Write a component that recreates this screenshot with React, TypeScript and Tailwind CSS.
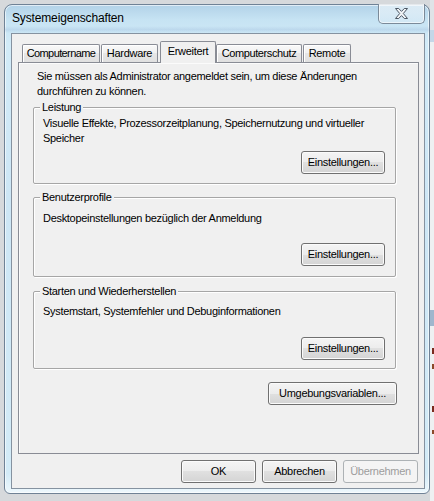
import React from "react";

const btnBase =
  "h-[23px] rounded-[3px] border flex items-center justify-center text-[11px] leading-[15px] tracking-[-0.3px] whitespace-nowrap";
const btnNormal =
  "border-[#707070] bg-[linear-gradient(to_bottom,#f4f4f4_0%,#ececec_50%,#e0e0e0_50%,#d4d4d4_100%)] shadow-[inset_0_0_0_1px_#fbfbfb] text-black";
const btnDisabled = "border-[#adb2b5] bg-[#f4f4f4] text-[#9d9d9d]";

function Button({
  label,
  className,
  disabled,
}: {
  label: string;
  className: string;
  disabled?: boolean;
}) {
  return (
    <div className={`${btnBase} ${disabled ? btnDisabled : btnNormal} ${className}`}>
      {label}
    </div>
  );
}

function Group({
  title,
  className,
  children,
}: {
  title: string;
  className: string;
  children: React.ReactNode;
}) {
  return (
    <div
      className={`relative ml-[14px] w-[363px] border border-[#a6a6a6] rounded-[2px] shadow-[inset_1px_1px_0_#ffffff,1px_1px_0_#ffffff] flex flex-col pl-[9px] pr-[10px] ${className}`}
    >
      <span className="absolute -top-[8px] left-[6px] px-[2px] bg-[#f0f0f0] text-[11px] leading-[15px] tracking-[-0.3px]">
        {title}
      </span>
      {children}
    </div>
  );
}

function Tab({
  label,
  className,
  selected,
}: {
  label: string;
  className: string;
  selected?: boolean;
}) {
  return (
    <div
      className={
        selected
          ? `relative z-10 h-[22px] -mb-px pb-[2px] border border-b-0 border-[#898c95] rounded-t-[2px] bg-[#f0f0f0] flex items-center justify-center text-[11px] leading-[15px] tracking-[-0.3px] whitespace-nowrap ${className}`
          : `h-[18px] border border-b-0 border-[#898c95] rounded-t-[2px] bg-[linear-gradient(to_bottom,#f9f9f9_0%,#f0f0f0_50%,#e6e6e6_50%,#e0e0e0_100%)] shadow-[inset_1px_1px_0_#ffffff] flex items-center justify-center text-[11px] leading-[15px] whitespace-nowrap ${className}`
      }
    >
      {label}
    </div>
  );
}

function CloseGlyph() {
  return (
    <svg width="13" height="11" viewBox="0 0 13 11">
      <polygon
        points="0.5,0.5 3.7,0.5 6.5,3.4 9.3,0.5 12.5,0.5 8.3,5.5 12.5,10.5 9.3,10.5 6.5,7.6 3.7,10.5 0.5,10.5 4.7,5.5"
        fill="#f2f5f8"
        stroke="#4b5663"
        strokeWidth="1"
        strokeLinejoin="round"
      />
    </svg>
  );
}

function Window() {
  return (
    <div className="w-[426px] h-[490px] border border-[#6f8296] rounded-t-[8px] rounded-b-[6px] bg-[linear-gradient(180deg,#b2d2e8_0%,#c6e3f3_3%,#d2ebf8_8%,#cde6f5_40%,#d3ebf7_96%,#eef8fd_100%)] shadow-[inset_0_0_0_1px_rgba(255,255,255,0.6)] flex flex-col">
      {/* caption */}
      <div className="h-[28px] flex items-start justify-between bg-[linear-gradient(180deg,rgba(255,255,255,0)_0%,rgba(255,255,255,0)_75%,rgba(160,190,220,0.35)_88%,rgba(255,255,255,0)_100%)]">
        <span className="pl-[7px] pt-[6px] text-[12px] leading-[15px] tracking-[-0.15px] text-black">
          Systemeigenschaften
        </span>
        <div className="-mt-px mr-[4px] w-[47px] h-[20px] border border-t-0 border-[#7b8a99] rounded-b-[5px] bg-[linear-gradient(180deg,rgba(255,255,255,0.55)_0%,rgba(235,244,250,0.6)_50%,rgba(214,232,244,0.6)_100%)] shadow-[inset_0_0_0_1px_rgba(255,255,255,0.6)] flex items-center justify-center pb-px">
          <CloseGlyph />
        </div>
      </div>

      {/* client area */}
      <div className="ml-[6px] mr-[4px] h-[456px] border border-[#8592a0] bg-[#f0f0f0] flex flex-col">
        <div className="ml-[6px] mr-[5px] pt-[7px] flex flex-col">
          <div className="h-[21px] pl-[4px] flex items-end">
            <Tab label="Computername" className="w-[78px] tracking-[-0.6px]" />
            <Tab label="Hardware" className="ml-[1px] w-[57px] tracking-[-0.3px]" />
            <Tab label="Erweitert" selected className="ml-[2px] w-[56px]" />
            <Tab label="Computerschutz" className="w-[86px] tracking-[-0.4px]" />
            <Tab label="Remote" className="ml-[1px] w-[48px] tracking-[-0.3px]" />
          </div>

          <div className="h-[392px] border border-[#898c95] bg-[#f0f0f0] shadow-[inset_1px_1px_0_#fbfbfb] flex flex-col">
            <p className="pt-[6px] pl-[18px] text-[11px] leading-[15px] tracking-[-0.3px]">
              Sie müssen als Administrator angemeldet sein, um diese Änderungen
              <br />
              durchführen zu können.
            </p>

            <Group title="Leistung" className="mt-[8px] h-[77px] pt-[8px] pb-[9px]">
              <p className="text-[11px] leading-[15px] tracking-[-0.3px]">
                Visuelle Effekte, Prozessorzeitplanung, Speichernutzung und virtueller
                <br />
                Speicher
              </p>
              <Button label="Einstellungen..." className="mt-auto self-end w-[84px]" />
            </Group>

            <Group title="Benutzerprofile" className="mt-[13px] h-[80px] pt-[13px] pb-[10px]">
              <p className="text-[11px] leading-[15px] tracking-[-0.3px]">
                Desktopeinstellungen bezüglich der Anmeldung
              </p>
              <Button label="Einstellungen..." className="mt-auto self-end w-[84px]" />
            </Group>

            <Group title="Starten und Wiederherstellen" className="mt-[14px] h-[78px] pt-[12px] pb-[8px]">
              <p className="text-[11px] leading-[15px] tracking-[-0.3px]">
                Systemstart, Systemfehler und Debuginformationen
              </p>
              <Button label="Einstellungen..." className="mt-auto self-end w-[84px]" />
            </Group>

            <Button
              label="Umgebungsvariablen..."
              className="mt-[13px] self-end mr-[21px] w-[129px]"
            />
          </div>

          <div className="mt-[6px] flex justify-end gap-[6px] pr-[1px]">
            <Button label="OK" className="w-[75px]" />
            <Button label="Abbrechen" className="w-[75px]" />
            <Button label="Übernehmen" disabled className="w-[75px]" />
          </div>
        </div>
      </div>
    </div>
  );
}

function BackdropEdge() {
  // Sliver of the window lying behind the dialog: text fragments peek out
  return (
    <div className="w-[4px] h-full flex flex-col items-end bg-[#eef0f2]">
      <div className="w-full h-[30px] bg-[#dfe3e7]" />
      <div className="w-full h-[12px] bg-[#c4d7e8]" />
      <div className="w-full h-[268px]" />
      <div className="w-full h-[16px] bg-[#9fb6cd]" />
      <div className="h-[22px]" />
      <div className="w-[2px] h-[6px] bg-[#7a2a1e]" />
      <div className="h-[10px]" />
      <div className="w-[2px] h-[5px] bg-[#8a4a2a]" />
      <div className="h-[37px]" />
      <div className="w-[2px] h-[6px] bg-[#7a2a1e]" />
      <div className="h-[18px]" />
      <div className="w-[2px] h-[4px] bg-[#8a4a2a]" />
      <div className="flex-1" />
    </div>
  );
}

export default function App() {
  return (
    <div className="w-[434px] h-[501px] bg-[#d6d9dc] flex font-['Liberation_Sans',Arial,sans-serif] text-black overflow-hidden">
      <div className="pl-[4px] pt-[4px]">
        <Window />
      </div>
      <BackdropEdge />
    </div>
  );
}
